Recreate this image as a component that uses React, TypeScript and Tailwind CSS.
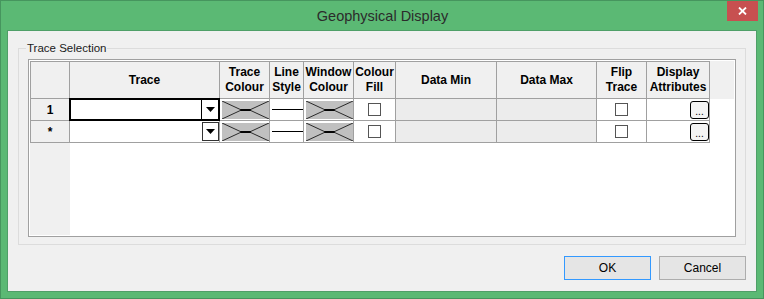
import React from "react";

const cols = ["w-[40px]", "w-[150px]", "w-[50px]", "w-[34px]", "w-[50px]", "w-[42px]", "w-[101px]", "w-[100px]", "w-[50px]", "w-[63px]"];

const headers: string[][] = [
  [""],
  ["Trace"],
  ["Trace", "Colour"],
  ["Line", "Style"],
  ["Window", "Colour"],
  ["Colour", "Fill"],
  ["Data Min"],
  ["Data Max"],
  ["Flip", "Trace"],
  ["Display", "Attributes"],
];

function Swatch() {
  return (
    <div className="h-full bg-[#c0c0c0]">
      <svg className="block h-full w-full" viewBox="0 0 46 19" preserveAspectRatio="none">
        <polyline points="0,0 19,9.5 27,9.5 46,0" fill="none" stroke="#000" strokeWidth="0.8" />
        <polyline points="0,19 19,9.5 27,9.5 46,19" fill="none" stroke="#000" strokeWidth="0.8" />
        <line x1="18" y1="9.5" x2="28" y2="9.5" stroke="#000" strokeWidth="2" />
      </svg>
    </div>
  );
}

function Check() {
  return <div className="h-[13px] w-[13px] border border-[#555] bg-white" />;
}

function Arrow({ selected }: { selected?: boolean }) {
  return (
    <div className={`flex w-[17px] items-center justify-center bg-white ${selected ? "border-l border-black" : "border border-[#333]"}`}>
      <svg width="9" height="5" viewBox="0 0 9 5">
        <polygon points="0,0 9,0 4.5,5" fill="#000" />
      </svg>
    </div>
  );
}

function Row({ label, selected }: { label: string; selected?: boolean }) {
  const cell = "h-[22px] border-r border-b border-[#a0a0a0] shrink-0";
  return (
    <div className="flex">
      <div className={`${cols[0]} ${cell} border-l bg-[#f0f0f0] flex items-center justify-center font-bold text-[12px]`}>{label}</div>
      <div className={`${cols[1]} ${cell} relative flex justify-end bg-white ${selected ? "p-[1px]" : "py-[1px]"}`}>
        <Arrow selected={selected} />
        {selected && <div className="pointer-events-none absolute -left-px -top-px -right-px -bottom-px border-2 border-black" />}
      </div>
      <div className={`${cols[2]} ${cell} bg-white pl-[2px] pt-[2px] pb-[1px]`}><Swatch /></div>
      <div className={`${cols[3]} ${cell} bg-white flex items-center pl-[2px]`}><div className="h-px w-full bg-black" /></div>
      <div className={`${cols[4]} ${cell} bg-white pl-[2px] pt-[2px] pb-[1px]`}><Swatch /></div>
      <div className={`${cols[5]} ${cell} bg-white flex items-center justify-center`}><Check /></div>
      <div className={`${cols[6]} ${cell} bg-[#ececec]`} />
      <div className={`${cols[7]} ${cell} bg-[#ececec]`} />
      <div className={`${cols[8]} ${cell} bg-white flex items-center justify-center`}><Check /></div>
      <div className={`${cols[9]} ${cell} bg-white flex items-center justify-end`}>
        <div className="flex h-[18px] w-[19px] items-end justify-center rounded-[3px] border border-black bg-[#f4f4f4] pb-[1px] text-[10px] leading-[10px]">...</div>
      </div>
    </div>
  );
}

export default function App() {
  return (
    <div className="flex h-[299px] w-[764px] flex-col border border-[#46955e] bg-[#5bb974] [font-family:'Liberation_Sans',Arial,sans-serif] text-black">
      {/* title bar */}
      <div className="flex h-[29px] shrink-0 items-start">
        <div className="w-[37px]" />
        <div className="flex-1 pt-[5px] text-center text-[14.5px] leading-[20px] text-[#2b2b2b]">Geophysical Display</div>
        <div className="mr-[5px] flex h-[20px] w-[31px] items-center justify-center bg-[#c75050]">
          <svg width="9" height="8" viewBox="0 0 9 8">
            <path d="M1 0.5 L8 7.5 M8 0.5 L1 7.5" stroke="#fff" strokeWidth="1.8" />
          </svg>
        </div>
      </div>

      {/* client */}
      <div className="mx-[6px] mb-[6px] flex flex-1 flex-col border border-[#4f9f68] bg-[#f0f0f0]">
        <div className="mx-[10px] mt-[17px] flex flex-col border border-[#dcdcdc]">
          <span className="-mt-[8px] ml-[7px] w-fit bg-[#f0f0f0] px-[1px] text-[11.5px] leading-[14px] text-[#1a1a1a]">Trace Selection</span>
          <div className="mx-[9px] mb-[7px] mt-[4px] flex h-[178px] flex-col border border-[#a0a0a0] bg-white p-[1px]">
            {/* header */}
            <div className="flex bg-[#f0f0f0]">
              {headers.map((h, i) => (
                <div key={i} className={`${cols[i]} h-[38px] shrink-0 border-t border-r border-b border-[#a0a0a0] ${i === 0 ? "border-l" : ""} flex flex-col items-center justify-center text-[12px] font-bold leading-[15px]`}>
                  {h.map((t, j) => (
                    <span key={j}>{t}</span>
                  ))}
                </div>
              ))}
            </div>
            <Row label="1" selected />
            <Row label="*" />
            <div className="flex flex-1">
              <div className="w-[40px] bg-[#f0f0f0]" />
            </div>
          </div>
        </div>

        <div className="mr-[10px] mt-[11px] flex justify-end gap-[8px]">
          <button className="h-[24px] w-[87px] border border-[#3399ff] bg-[#e5e5e5] text-[12px]">OK</button>
          <button className="h-[24px] w-[87px] border border-[#adadad] bg-[#e5e5e5] text-[12px]">Cancel</button>
        </div>
      </div>
    </div>
  );
}
